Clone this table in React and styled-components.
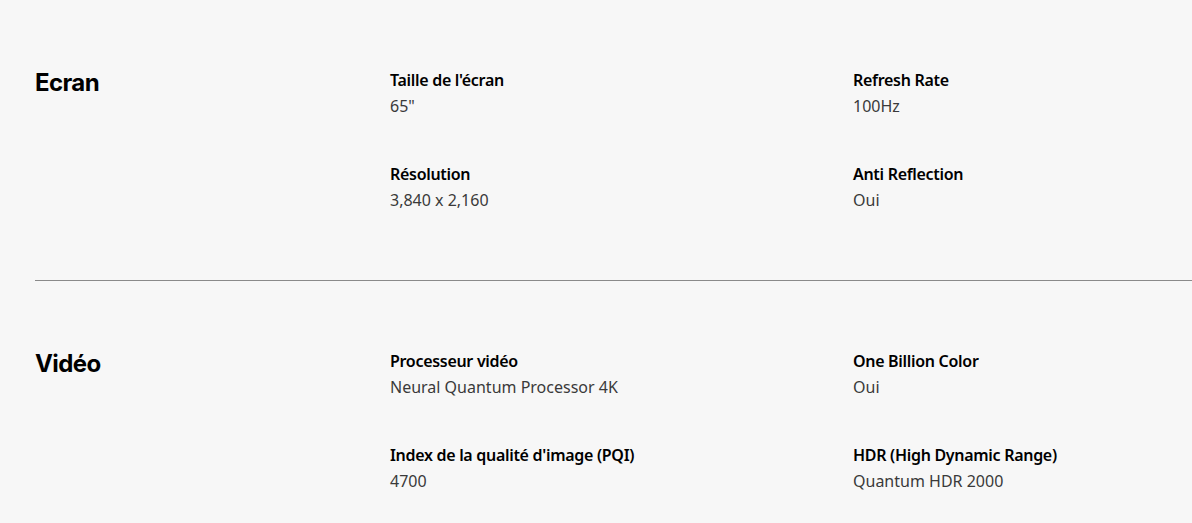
import React from 'react';
import styled, { createGlobalStyle } from 'styled-components';

const GlobalStyle = createGlobalStyle`
    body {
        margin: 0;
        background-color: #f7f7f7;
        font-family: 'Noto Sans', 'Open Sans', sans-serif;
    }
`;

export const Page = styled.div`
    background-color: #f7f7f7;
    padding-left: 35px;
`;

export const Section = styled.section`
    display: grid;
    grid-template-columns: 355px 463px 1fr;
    padding: 67px 0;
    border-bottom: ${props => (props.divider ? '1px solid #8a8a8a' : 'none')};
`;

export const SectionTitle = styled.h2`
    margin: 0;
    padding-top: 1px;
    font-family: 'Inter', sans-serif;
    font-size: 24px;
    font-weight: 700;
    line-height: 30px;
    letter-spacing: -0.6px;
    color: #000000;
`;

export const SpecGrid = styled.div`
    grid-column: 2 / span 2;
    display: grid;
    grid-template-columns: 463px 1fr;
    row-gap: 42px;
`;

export const Spec = styled.div`
    display: flex;
    flex-direction: column;
`;

export const Label = styled.div`
    font-size: 16px;
    font-weight: 600;
    line-height: 26px;
    letter-spacing: -0.3px;
    color: #000000;
`;

export const Value = styled.div`
    font-size: 16px;
    font-weight: 400;
    line-height: 26px;
    color: #3a3a3a;
`;

const sections = [
    {
        title: 'Ecran',
        specs: [
            ['Taille de l\'écran', '65"'],
            ['Refresh Rate', '100Hz'],
            ['Résolution', '3,840 x 2,160'],
            ['Anti Reflection', 'Oui'],
        ],
    },
    {
        title: 'Vidéo',
        specs: [
            ['Processeur vidéo', 'Neural Quantum Processor 4K'],
            ['One Billion Color', 'Oui'],
            ['Index de la qualité d\'image (PQI)', '4700'],
            ['HDR (High Dynamic Range)', 'Quantum HDR 2000'],
        ],
    },
];

const App = () => {
    return (<>
        <GlobalStyle />
        <Page>
            {sections.map((section, i) => (
                <Section key={section.title} divider={i < sections.length - 1}>
                    <SectionTitle>{section.title}</SectionTitle>
                    <SpecGrid>
                        {section.specs.map(([label, value]) => (
                            <Spec key={label}>
                                <Label>{label}</Label>
                                <Value>{value}</Value>
                            </Spec>
                        ))}
                    </SpecGrid>
                </Section>
            ))}
        </Page>
    </>);
};

export default App;
